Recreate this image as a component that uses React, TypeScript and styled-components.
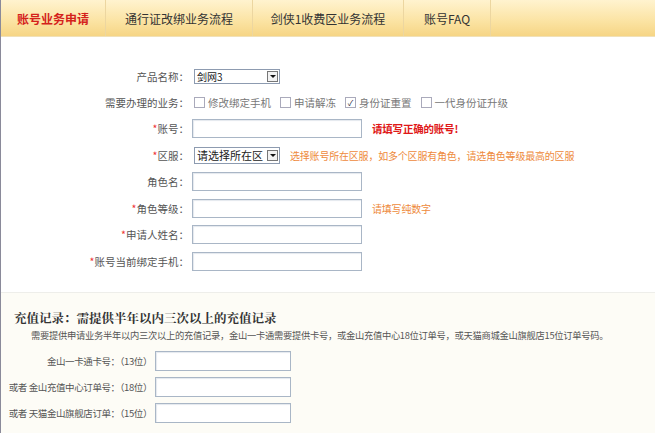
import React from "react";
import styled, { createGlobalStyle } from "styled-components";

const Global = createGlobalStyle`
  html, body { margin: 0; padding: 0; background: #fff; }
  body { font-family: "Noto Sans CJK SC", "Noto Sans", sans-serif; font-size: 10.5px; color: #444; }
`;

const Page = styled.div`
  width: 655px; height: 433px; overflow: hidden; border-left: 1px solid #8a8a9a; box-sizing: border-box;
  display: flex; flex-direction: column;
`;
const TabBar = styled.div`
  height: 36px; display: flex; background: linear-gradient(#fff3cf, #fbe3a2 60%, #f6d585);
  border-bottom: 1px solid #f1e1b8;
`;
const Tab = styled.div<{ $w: number; $active?: boolean }>`
  width: ${p => p.$w}px; display: flex; align-items: center; justify-content: center;
  font-size: 12px; color: ${p => (p.$active ? "#d4211b" : "#333")}; font-weight: ${p => (p.$active ? 700 : 400)};
  border-right: 1px solid #ecd6a0;
`;
const Upper = styled.div`
  padding-top: 26px; height: 256px; box-sizing: border-box; display: flex; flex-direction: column;
  border-bottom: 1px solid #eeeeea;
`;
const Row = styled.div<{ $h: number; $lw: number }>`
  display: flex; align-items: center; height: ${p => p.$h}px;
  & > label:first-child { width: ${p => p.$lw}px; text-align: right; flex: none; }
`;
const Label = styled.label<{ $small?: boolean }>`
  color: #555; white-space: nowrap;
  ${p => (p.$small ? "font-size: 9.5px; letter-spacing: -0.4px;" : "")}
`;
const Star = styled.span`color: #e33;`;
const Input = styled.div<{ $w: number; $h?: number }>`
  width: ${p => p.$w}px; height: ${p => p.$h ?? 19}px; box-sizing: border-box; margin-left: 3px; flex: none;
  border: 1px solid #a9b6c6; background: #fff; box-shadow: inset 1px 1px 1px #e4e8ee;
`;
const Select = styled.div<{ $big?: boolean }>`
  width: 86px; height: ${p => (p.$big ? 17 : 15)}px; margin-left: 5px; box-sizing: border-box; border: 1px solid #8d9bb0;
  display: flex; align-items: center; justify-content: space-between; padding-left: 2px;
  font-size: ${p => (p.$big ? 11 : 10)}px; color: #222; white-space: nowrap; flex: none; background: #fff;
`;
const Arrow = styled.span`
  width: 11px; height: 11px; border: 1px solid #777; margin-right: 1px; box-sizing: border-box; flex: none;
  display: flex; align-items: center; justify-content: center; background: #f2f2f2;
  &::after { content: ""; border: 3px solid transparent; border-top: 3px solid #111; margin-top: 3px; }
`;
const Checks = styled.div`display: flex; gap: 9px; margin-left: 5px;`;
const Check = styled.span<{ $on?: boolean }>`
  display: flex; align-items: center; gap: 3px; color: #777;
  &::before { content: "${p => (p.$on ? "✓" : "")}"; width: 9px; height: 9px; border: 1px solid #aab; font-size: 8px; line-height: 9px; text-align: center; color: #223; }
`;
const Hint = styled.span<{ $red?: boolean }>`
  margin-left: 10px; color: ${p => (p.$red ? "#e01818" : "#ee8a3c")}; font-weight: ${p => (p.$red ? 700 : 400)};
  font-size: ${p => (p.$red ? "10.5px" : "10px")}; white-space: nowrap; letter-spacing: -0.2px;
`;
const Lower = styled.div`
  flex: 1; background: #fdfcf6; padding: 16px 0 0 13px;
`;
const Title = styled.div`
  font-family: "Noto Serif CJK SC", "Noto Sans CJK SC", serif; font-weight: 700; font-size: 12.5px; color: #333;
`;
const Desc = styled.div`margin: 1px 0 9px 17px; font-size: 9.3px; letter-spacing: -0.3px; color: #555; white-space: nowrap;`;
const LRows = styled.div`display: flex; flex-direction: column; gap: 6px; margin-left: -13px;`;

export default function App() {
  return (
    <Page>
      <Global />
      <TabBar>
        <Tab $w={104} $active>账号业务申请</Tab>
        <Tab $w={146}>通行证改绑业务流程</Tab>
        <Tab $w={150}>剑侠1收费区业务流程</Tab>
        <Tab $w={86}>账号FAQ</Tab>
      </TabBar>
      <Upper>
        <Row $h={26} $lw={188}><Label>产品名称：</Label><Select>剑网3<Arrow /></Select></Row>
        <Row $h={26} $lw={188}><Label>需要办理的业务：</Label>
          <Checks><Check>修改绑定手机</Check><Check>申请解冻</Check><Check $on>身份证重置</Check><Check>一代身份证升级</Check></Checks>
        </Row>
        <Row $h={27} $lw={188}><Label><Star>*</Star>账号：</Label><Input $w={170} /><Hint $red>请填写正确的账号!</Hint></Row>
        <Row $h={26} $lw={188}><Label><Star>*</Star>区服：</Label><Select $big>请选择所在区<Arrow /></Select><Hint>选择账号所在区服，如多个区服有角色，请选角色等级最高的区服</Hint></Row>
        <Row $h={27} $lw={188}><Label>角色名：</Label><Input $w={170} /></Row>
        <Row $h={26} $lw={188}><Label><Star>*</Star>角色等级：</Label><Input $w={170} /><Hint>请填写纯数字</Hint></Row>
        <Row $h={27} $lw={188}><Label><Star>*</Star>申请人姓名：</Label><Input $w={170} /></Row>
        <Row $h={26} $lw={188}><Label><Star>*</Star>账号当前绑定手机：</Label><Input $w={170} /></Row>
      </Upper>
      <Lower>
        <Title>充值记录：需提供半年以内三次以上的充值记录</Title>
        <Desc>需要提供申请业务半年以内三次以上的充值记录，金山一卡通需要提供卡号，或金山充值中心18位订单号，或天猫商城金山旗舰店15位订单号码。</Desc>
        <LRows>
          <Row $h={20} $lw={151}><Label $small>金山一卡通卡号：（13位）</Label><Input $w={136} $h={20} /></Row>
          <Row $h={20} $lw={151}><Label $small>或者 金山充值中心订单号：（18位）</Label><Input $w={136} $h={20} /></Row>
          <Row $h={20} $lw={151}><Label $small>或者 天猫金山旗舰店订单：（15位）</Label><Input $w={136} $h={20} /></Row>
        </LRows>
      </Lower>
    </Page>
  );
}
